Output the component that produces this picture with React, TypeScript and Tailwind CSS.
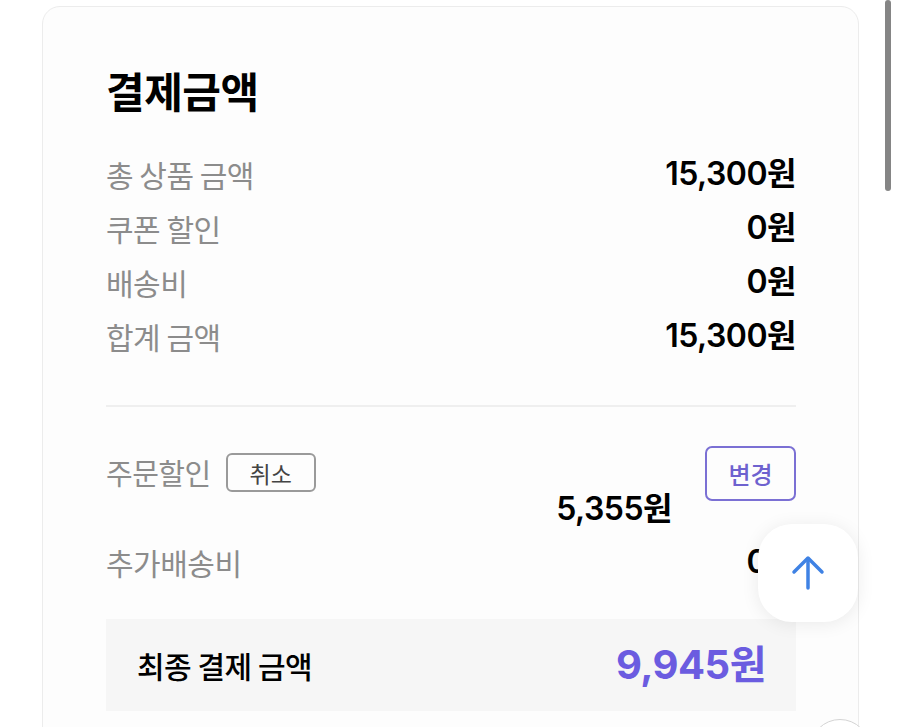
import React from "react"

const font = { fontFamily: '"Noto Sans CJK KR", "Noto Sans", sans-serif' }
// 숫자는 Inter 로 (레퍼런스가 SF 계열 숫자)
const num = { fontFamily: 'Inter, "Noto Sans CJK KR", sans-serif' }

type Row = { label: string; value: string }

const rows: Row[] = [
  { label: "총 상품 금액", value: "15,300원" },
  { label: "쿠폰 할인", value: "0원" },
  { label: "배송비", value: "0원" },
  { label: "합계 금액", value: "15,300원" },
]

export default function App() {
  return (
    <div className="relative h-[727px] w-[900px] overflow-hidden bg-white" style={font}>
      {/* 결제 카드 */}
      <div className="ml-[42px] mt-[6px] w-[817px] rounded-t-[18px] border border-[#ececec] bg-[#fdfdfd] pl-[63px] pr-[62px] pt-[58px] pb-[40px]">
        <h2 className="text-[42px] font-bold leading-[50px] text-black tracking-[-0.5px]">결제금액</h2>

        <div className="mt-[32px]">
          {rows.map((r) => (
            <div key={r.label} className="flex h-[54px] items-center justify-between">
              <span className="text-[30px] text-[#8c8c8c] tracking-[-0.5px]">{r.label}</span>
              <span className="text-[32px] font-semibold text-black tracking-[-0.5px]" style={num}>
                {r.value}
              </span>
            </div>
          ))}
        </div>

        <div className="mt-[42px] h-[2px] bg-[#efefef]" />

        {/* 주문할인 */}
        <div className="mt-[39px] flex items-start justify-between">
          <div className="mt-[5px] flex items-center gap-[15px]">
            <span className="text-[29px] text-[#8c8c8c] tracking-[-0.5px]">주문할인</span>
            <button className="flex h-[39px] w-[90px] items-center justify-center rounded-[6px] border-2 border-[#9a9a9a] text-[23px] text-[#444]">
              취소
            </button>
          </div>
          <button className="flex h-[55px] w-[91px] items-center justify-center rounded-[7px] border-2 border-[#7b70d4] text-[24px] font-medium text-[#6e62cf]">
            변경
          </button>
        </div>
        <div className="-mt-[12px] flex justify-end pr-[124px]">
          <span className="text-[32px] font-semibold leading-[40px] text-black tracking-[-0.5px]" style={num}>
            5,355원
          </span>
        </div>

        <div className="mt-[6px] flex h-[54px] items-center justify-between">
          <span className="text-[30px] text-[#8c8c8c] tracking-[-0.5px]">추가배송비</span>
          <span className="text-[32px] font-semibold text-black tracking-[-0.5px]" style={num}>
            0원
          </span>
        </div>

        {/* 최종 결제 금액 */}
        <div className="mt-[30px] flex h-[92px] items-center justify-between bg-[#f6f6f6] pl-[31px] pr-[30px]">
          <span className="text-[30px] font-medium text-black tracking-[-0.5px]">최종 결제 금액</span>
          <span className="text-[40px] font-bold text-[#6b5ce0] tracking-[-0.5px]" style={num}>
            9,945원
          </span>
        </div>
      </div>

      {/* 위로 가기 버튼 */}
      <button className="absolute left-[758px] top-[524px] flex h-[98px] w-[100px] items-center justify-center rounded-[34px] bg-white shadow-[0_2px_18px_rgba(0,0,0,0.08)]">
        <svg width="36" height="38" viewBox="0 0 36 38" fill="none" stroke="#3f82e4" strokeWidth="3.5" strokeLinecap="round" strokeLinejoin="round">
          <path d="M18 34V5" />
          <path d="M4 18L18 4L32 18" />
        </svg>
      </button>

      {/* 아래쪽 버튼 (잘림) */}
      <div className="absolute left-[810px] top-[719px] h-[60px] w-[60px] rounded-full border border-[#d4d4d4] bg-white" />

      {/* 스크롤바 */}
      <div className="absolute left-[885px] top-0 h-[191px] w-[6px] rounded-full bg-[#858585]" />
    </div>
  )
}
